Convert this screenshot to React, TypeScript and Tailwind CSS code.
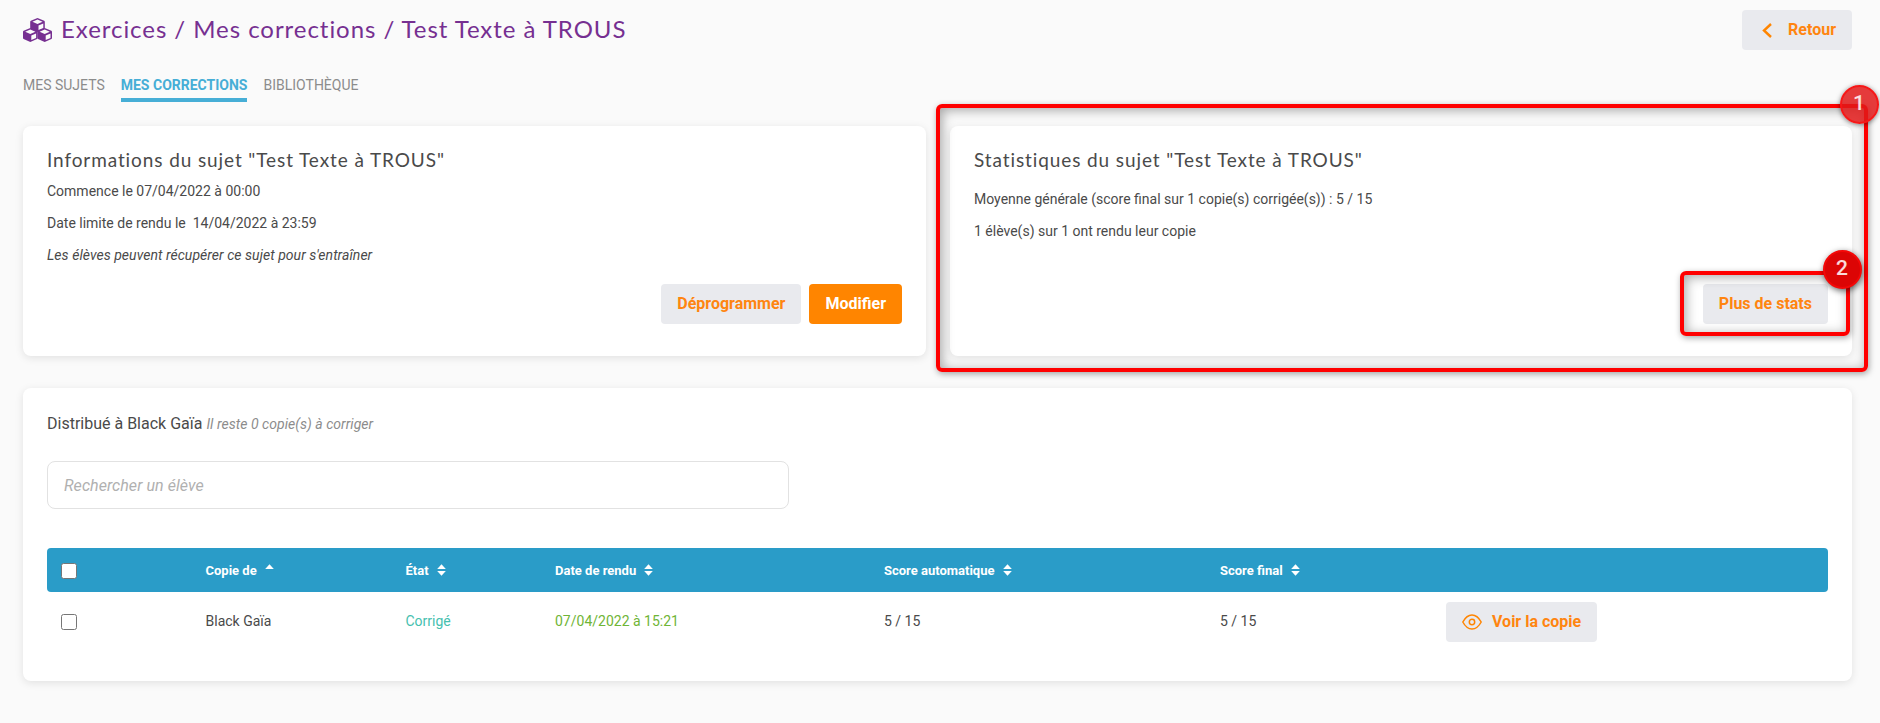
import React from "react";

const button =
  "flex h-10 items-center rounded bg-[#e9eaee] px-4 text-[16px] font-bold leading-none text-[#ff8510]";
const card = "rounded-lg bg-white shadow-[0_2px_8px_rgba(0,0,0,0.1)]";
const display = "font-['Lato',sans-serif]";

function Cube({ x, y }: { x: number; y: number }) {
  return (
    <g transform={`translate(${x} ${y})`}>
      <path fill="#762f91" d="M7.300 0 14 2.700q.6.300.6 1v6.300q0 .6-.6.900L7.300 14 .6 10.900Q0 10.600 0 10V3.700q0-.7.6-1z" />
      <path fill="#fafafa" d="M7.300 1.600 12.400 3.700 7.300 5.900 2.200 3.700zM8.300 7.600 13.100 5.500V9.900L8.300 12.100z" />
    </g>
  );
}

function Cubes() {
  return (
    <svg width="29" height="24" viewBox="0 0 29 24" className="mr-[9px]">
      <Cube x={7.2} y={0} />
      <Cube x={0} y={10} />
      <Cube x={14.4} y={10} />
    </svg>
  );
}

function Sort({ up = false }: { up?: boolean }) {
  return (
    <svg width="9" height="12" viewBox="0 0 9 12" className="ml-2 mt-[-2px]" fill="#fff">
      <path d="M4.5 0.3 8.8 5H.2z" />
      {!up && <path d="M4.5 11.7.2 7h8.6z" />}
    </svg>
  );
}

function Box() {
  return <input type="checkbox" className="m-0 block size-4 appearance-none rounded-[2.5px] border border-[#767676] bg-white" />;
}

function Frame({ place }: { place: string }) {
  return (
    <div
      className={`pointer-events-none absolute rounded-[6px] border-4 border-[#ff0000] shadow-[1px_2px_6px_rgba(0,0,0,0.35),inset_2px_2px_12px_rgba(0,0,0,0.35)] ${place}`}
    />
  );
}

const columns = "grid grid-cols-[158.5px_200px_149.5px_329px_336px_226px_1fr] items-center";
const badge =
  "absolute flex size-[39px] items-center justify-center rounded-full border-2 pb-px text-[21px] font-medium text-white/85";

export default function App() {
  return (
    <div className="relative h-[723px] w-[1880px] overflow-hidden bg-[#fafafa] px-[23px] pr-7 pt-[10px] font-['Roboto',sans-serif] text-[14px] text-[#4a4a4a]">
      <header className="flex h-10 items-center justify-between">
        <h1 className={`flex items-center text-[24px] leading-8 text-[#762f91] ${display}`}>
          <Cubes />
          <span className="pb-[3px] tracking-[0.95px]">Exercices / Mes corrections / Test Texte à TROUS</span>
        </h1>
        <button className={button}>
          <svg width="12" height="16" viewBox="0 0 12 16" className="ml-[3px] mr-[15px]" fill="none" stroke="#ff8500" strokeWidth="2.4">
            <path d="M10 2 3 8.5 10 15" />
          </svg>
          Retour
        </button>
      </header>

      <nav className="mt-[23px] flex h-[29px] gap-4 text-[14px] leading-6 text-[#8c8c8c]">
        <span>MES SUJETS</span>
        <span className="border-b-4 border-[#46aed6] font-bold text-[#46aed6]">MES CORRECTIONS</span>
        <span>BIBLIOTHÈQUE</span>
      </nav>

      <main className="mt-6">
        <div className="grid grid-cols-[903px_902px] gap-6">
          <section className={`flex h-[230px] flex-col p-6 pb-8 ${card}`}>
            <h2 className={`h-[25px] text-[19px] leading-[20px] tracking-[0.9px] ${display}`}>
              Informations du sujet "Test Texte à TROUS"
            </h2>
            <p className="leading-8">Commence le 07/04/2022 à 00:00</p>
            <p className="whitespace-pre leading-8">{"Date limite de rendu le  14/04/2022 à 23:59"}</p>
            <p className="italic leading-8 tracking-[0.045px]">Les élèves peuvent récupérer ce sujet pour s'entraîner</p>
            <div className="mt-auto flex justify-end gap-2">
              <button className={button}>Déprogrammer</button>
              <button className="h-10 rounded bg-[#ff8500] px-4 text-[16px] font-bold text-white">Modifier</button>
            </div>
          </section>
          <section className={`flex h-[230px] flex-col p-6 pb-8 ${card}`}>
            <h2 className={`h-[33px] text-[19px] leading-[20px] tracking-[0.9px] ${display}`}>
              Statistiques du sujet "Test Texte à TROUS"
            </h2>
            <p className="leading-8">Moyenne générale (score final sur 1 copie(s) corrigée(s)) : 5 / 15</p>
            <p className="leading-8">1 élève(s) sur 1 ont rendu leur copie</p>
            <div className="mt-auto flex justify-end">
              <button className={button}>Plus de stats</button>
            </div>
          </section>
        </div>

        <section className={`mt-8 h-[293px] px-6 pt-6 ${card}`}>
          <p className="text-[16px] leading-6">
            Distribué à Black Gaïa{" "}
            <em className="text-[14px] tracking-[0.04px] text-[#8c8c8c]">Il reste 0 copie(s) à corriger</em>
          </p>
          <input
            placeholder="Rechercher un élève"
            className="mt-[25px] block h-12 w-[742px] rounded-lg border border-[#e2e2e2] px-4 text-[16px] italic tracking-[0.05px] placeholder:text-[#b0b0b0]"
          />
          <div className={`mt-[39px] h-11 rounded bg-[#2a9cc8] pt-[2px] text-[13px] font-bold text-white ${columns}`}>
            <span className="pl-[14px]"><Box /></span>
            <span className="flex items-center">Copie de<Sort up /></span>
            <span className="flex items-center">État<Sort /></span>
            <span className="flex items-center">Date de rendu<Sort /></span>
            <span className="flex items-center">Score automatique<Sort /></span>
            <span className="flex items-center">Score final<Sort /></span>
          </div>
          <div className={`mt-[10px] h-10 ${columns}`}>
            <span className="pl-[14px]"><Box /></span>
            <span className="pb-[2px]">Black Gaïa</span>
            <span className="pb-[2px] text-[#46bfaf]">Corrigé</span>
            <span className="pb-[2px] text-[#6fb536]">07/04/2022 à 15:21</span>
            <span className="pb-[2px]">5 / 15</span>
            <span className="pb-[2px]">5 / 15</span>
            <button className={`justify-self-start ${button}`}>
              <svg width="20" height="16" viewBox="0 0 20 16" className="mr-[10px]" fill="none" stroke="#ff8500" strokeWidth="1.5">
                <path d="M.8 8C3 4 6.300 1 10 1s7 3 9.200 7c-2.200 4-5.500 7-9.200 7S3 12 .8 8z" />
                <circle cx="10" cy="8" r="2.700" />
              </svg>
              Voir la copie
            </button>
          </div>
        </section>
      </main>

      <Frame place="left-[936px] top-[104px] h-[268px] w-[932px]" />
      <Frame place="left-[1680px] top-[271px] h-[65px] w-[170px]" />
      <div className={`left-[1839.500px] top-[84.500px] border-[#f51818] bg-[#e11919]/85 shadow-[0_1px_5px_rgba(0,0,0,0.5)] ${badge}`}>1</div>
      <div className={`left-[1822.500px] top-[249.500px] border-[#f40808] bg-[#dc0505] shadow-[1px_2px_6px_rgba(0,0,0,0.6)] ${badge}`}>2</div>
    </div>
  );
}
